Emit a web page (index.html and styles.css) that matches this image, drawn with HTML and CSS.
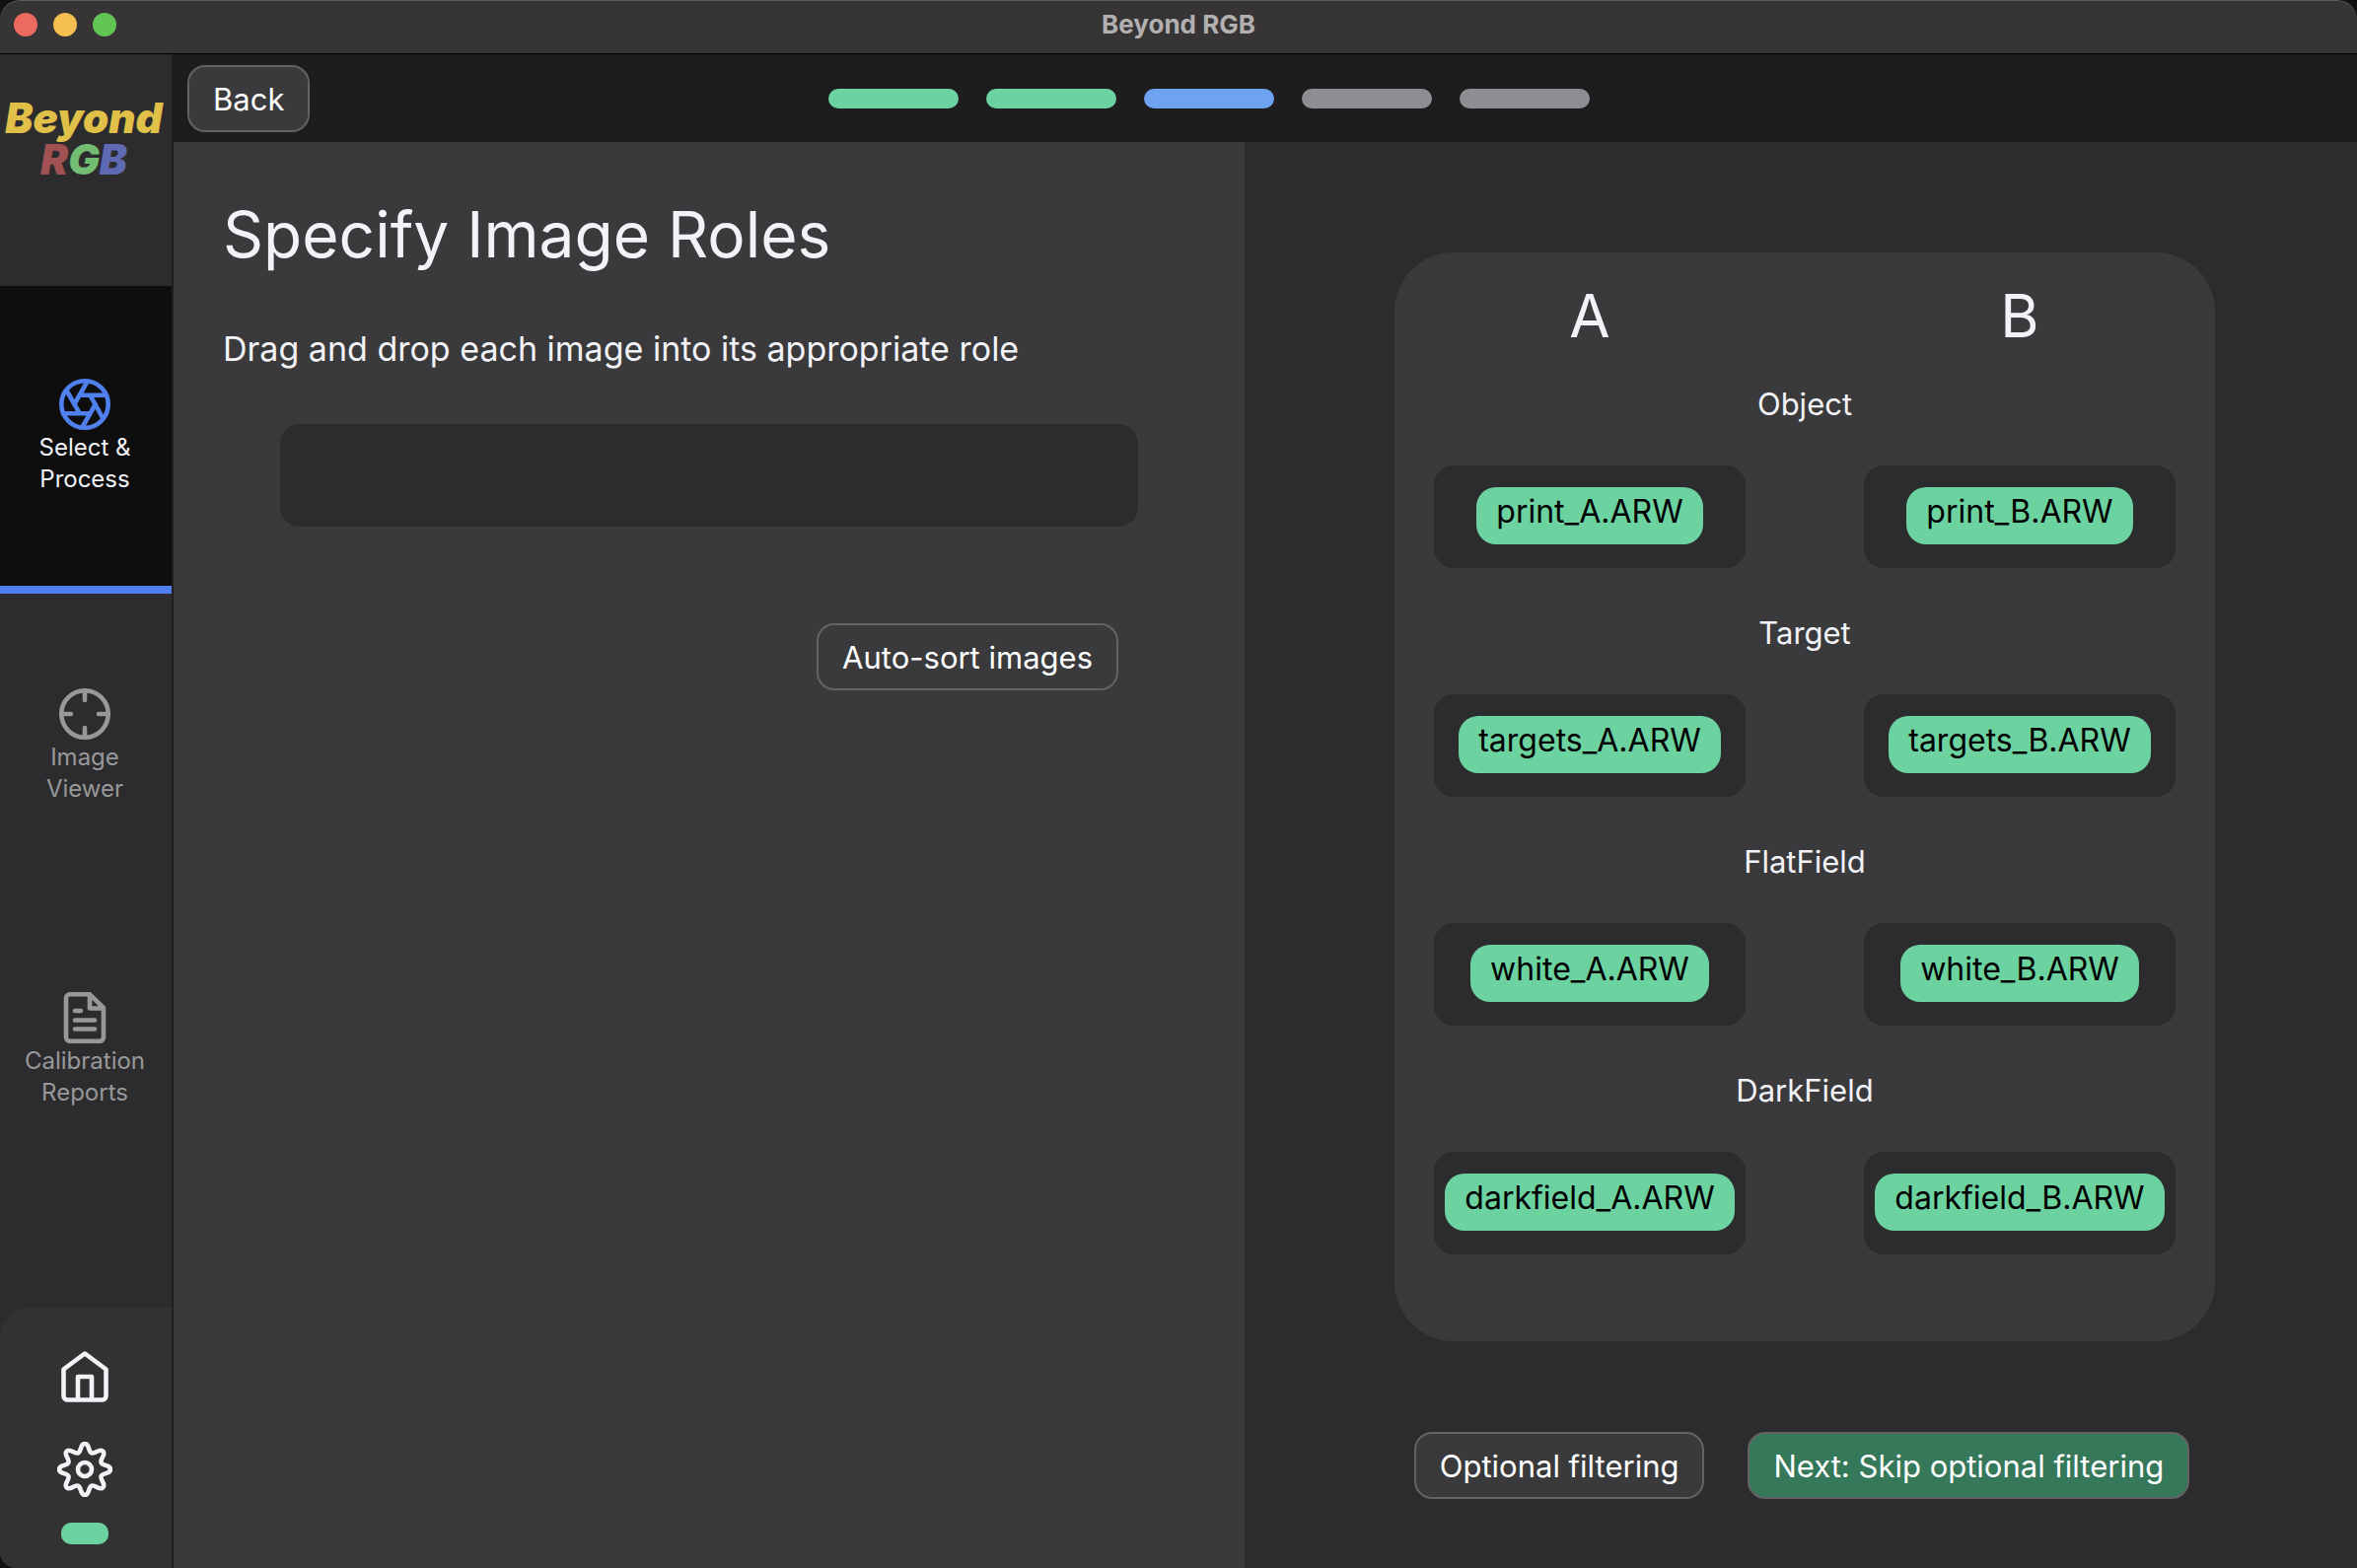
FILE: index.html
```html
<!DOCTYPE html>
<html lang="en">
<head>
<meta charset="utf-8">
<title>Beyond RGB</title>
<link rel="stylesheet" href="styles.css">
</head>
<body>
<div class="window">
  <header class="titlebar">
    <div class="lights"><span class="light close"></span><span class="light minimize"></span><span class="light zoom"></span></div>
    <span class="window-title">Beyond RGB</span>
  </header>
  <div class="app">
    <aside class="sidebar">
      <div class="logo">
        <span class="logo-top">Beyond</span>
        <span class="logo-bottom"><span class="r">R</span><span class="g">G</span><span class="b">B</span></span>
      </div>
      <nav class="nav">
        <a class="nav-item active" href="#process">
          <svg class="icon blue" viewBox="0 0 52 52"><circle cx="26" cy="26" r="23.700"/><path d="M20.700 16.700H48M31.300 16.700 44.500 40.500M36.700 26 23.500 49M31.300 35.200H4M20.700 35.200 7.500 12M15.300 26 28.500 3"/></svg>
          <span>Select &amp;<br>Process</span>
        </a>
        <a class="nav-item" href="#viewer">
          <svg class="icon" viewBox="0 0 52 52"><circle cx="26" cy="26" r="23.700"/><path d="M26 2v10M26 50V40M2 26h10M50 26H40"/></svg>
          <span>Image<br>Viewer</span>
        </a>
        <a class="nav-item" href="#reports">
          <svg class="icon" viewBox="0 0 52 52"><path d="M31 2.300H11a4 4 0 0 0-4 4v39.400a4 4 0 0 0 4 4h30a4 4 0 0 0 4-4V16L31 2.300V16.500H45M16 19h6M16 28.500h20M16 37.500h20"/></svg>
          <span>Calibration<br>Reports</span>
        </a>
      </nav>
      <div class="side-footer">
        <a href="#home" aria-label="Home"><svg class="icon white" viewBox="0 0 52 52"><path d="M4.500 18.500 26 2.500l21.500 16V45.500a4 4 0 0 1-4 4h-35a4 4 0 0 1-4-4ZM19 49V26h14v23"/></svg></a>
        <a href="#settings" aria-label="Settings"><svg class="icon white gear" viewBox="-28 -28 56 56"><circle r="7"/><path d="M0-26C5-26 3.200-18.100 6.900-16.600S14.900-21.900 18.400-18.400 15.100-10.600 16.600-6.900 26-5 26 0 18.100 3.200 16.600 6.900 21.900 14.900 18.400 18.400 10.600 15.100 6.900 16.600 5 26 0 26-3.200 18.100-6.900 16.600-14.900 21.900-18.400 18.400-15.100 10.600-16.600 6.900-26 5-26 0-18.100-3.200-16.600-6.900-21.900-14.900-18.400-18.400-10.600-15.100-6.900-16.600-5-26 0-26Z"/></svg></a>
        <span class="status"></span>
      </div>
    </aside>
    <div class="main">
      <div class="topbar">
        <button class="btn" type="button">Back</button>
        <div class="steps"><span class="step done"></span><span class="step done"></span><span class="step current"></span><span class="step"></span><span class="step"></span></div>
      </div>
      <div class="panels">
        <section class="left">
          <h1>Specify Image Roles</h1>
          <p>Drag and drop each image into its appropriate role</p>
          <div class="dropzone"></div>
          <button class="btn autosort" type="button">Auto-sort images</button>
        </section>
        <section class="right">
          <div class="card">
            <div class="row heads"><h2>A</h2><h2>B</h2></div>
            <h3>Object</h3>
            <div class="row"><div class="slot"><span class="chip">print_A.ARW</span></div><div class="slot"><span class="chip">print_B.ARW</span></div></div>
            <h3>Target</h3>
            <div class="row"><div class="slot"><span class="chip">targets_A.ARW</span></div><div class="slot"><span class="chip">targets_B.ARW</span></div></div>
            <h3>FlatField</h3>
            <div class="row"><div class="slot"><span class="chip">white_A.ARW</span></div><div class="slot"><span class="chip">white_B.ARW</span></div></div>
            <h3>DarkField</h3>
            <div class="row"><div class="slot"><span class="chip">darkfield_A.ARW</span></div><div class="slot"><span class="chip">darkfield_B.ARW</span></div></div>
          </div>
          <div class="actions">
            <button class="btn" type="button">Optional filtering</button>
            <button class="btn next" type="button">Next: Skip optional filtering</button>
          </div>
        </section>
      </div>
    </div>
  </div>
</div>
</body>
</html>
```
FILE: styles.css
```css
* { box-sizing: border-box; }
body { margin: 0; background: #111; font-family: Inter, "Liberation Sans", sans-serif; color: #f2f2f7; }
h1, h2, h3, p { margin: 0; font-weight: 400; }
.window { min-height: 100vh; display: flex; flex-direction: column; background: #2c2c2e; border-radius: 20px 20px 0 16px; overflow: hidden; }

.titlebar { height: 55px; flex: none; display: grid; grid-template-columns: 1fr auto 1fr; align-items: center; padding: 0 14px 4px; background: #373435; border-bottom: 1px solid #000; border-radius: 20px 20px 0 0; box-shadow: inset 0 1px 0 #5a5859; }
.lights { display: flex; gap: 16px; }
.light { width: 24px; height: 24px; border-radius: 50%; }
.close { background: #ed6a5e; }
.minimize { background: #f5bf4f; }
.zoom { background: #61c554; }
.window-title { font-size: 26px; line-height: 32px; font-weight: 700; color: #b3b0b1; }

.app { flex: 1; display: flex; }
.sidebar { width: 176px; flex: none; display: flex; flex-direction: column; border-right: 2px solid #1f1f20; background: #2c2c2e; }
.logo { height: 235px; padding: 44px 4px 0 0; display: flex; flex-direction: column; align-items: center; font-size: 42px; line-height: 42px; font-weight: 900; font-style: italic; }
.logo-top { color: #e0c048; }
.r { color: #a05252; }
.g { color: #73bd73; }
.b { color: #606ab2; }
.nav-item { height: 308px; display: flex; flex-direction: column; align-items: center; justify-content: center; gap: 2px; padding: 2px 2px 0 0; text-align: center; font-size: 24px; line-height: 32px; color: #98989a; text-decoration: none; }
.nav-item.active { height: 312px; background: #0e0e0e; color: #f2f2f7; border-bottom: 8px solid #4f80ee; }
.icon { display: block; width: 52px; height: 52px; fill: none; stroke: #98989a; stroke-width: 4.6; stroke-linecap: round; stroke-linejoin: round; }
.icon.blue { stroke: #4f80ee; }
.icon.white { stroke: #f2f2f7; }
.icon.gear { width: 56px; height: 56px; }
.side-footer { margin-top: auto; height: 264px; padding: 44px 2px 0 0; display: flex; flex-direction: column; align-items: center; background: #323232; border-top-left-radius: 30px; }
.side-footer a + a { margin-top: 40px; }
.status { width: 48px; height: 22px; margin-top: 26px; border-radius: 10px; background: #6cd2a0; }

.main { flex: 1; display: flex; flex-direction: column; }
.topbar { height: 89px; display: grid; grid-template-columns: 1fr auto 1fr; align-items: center; padding: 0 14px; background: #1d1d1d; }
.topbar .btn { justify-self: start; }
.steps { display: flex; gap: 28px; padding-right: 114px; }
.step { width: 132px; height: 20px; border-radius: 10px; background: #8e8d93; }
.step.done { background: #6cd2a0; }
.step.current { background: #70a2f2; }
.btn { height: 68px; padding: 2px 24px 0; border: 2px solid #636366; border-radius: 18px; background: #3a3a3c; color: #fff; font-family: inherit; font-size: 31px; line-height: 40px; white-space: nowrap; }
.btn.next { background: #35785a; }

.panels { flex: 1; display: grid; grid-template-columns: 1086fr 1128fr; }
.left { background: #3a3a3c; padding: 50px; display: flex; flex-direction: column; }
.left h1 { font-size: 64px; line-height: 88px; }
.left p { margin-top: 50px; font-size: 34px; line-height: 44px; }
.dropzone { height: 104px; margin: 54px 58px 0; border-radius: 20px; background: #2c2c2e; }
.autosort { align-self: flex-end; margin: 98px 78px 0 0; }

.right { padding: 112px 144px 0 152px; }
.card { height: 1104px; padding: 30px 40px 0; border-radius: 60px; background: #3a3a3c; }
.row { display: grid; grid-template-columns: 1fr 1fr; gap: 120px; }
.card h2 { font-size: 60px; line-height: 68px; text-align: center; }
.card h3 { height: 128px; padding-top: 46px; font-size: 31px; line-height: 40px; text-align: center; }
.card .heads + h3 { height: 118px; padding-top: 36px; }
.slot { height: 104px; padding-top: 22px; display: flex; justify-content: center; align-items: flex-start; border-radius: 20px; background: #2c2c2e; }
.chip { height: 58px; padding: 5px 20px 0; border-radius: 20px; background: #6cd2a0; color: #000; font-size: 32px; line-height: 40px; }
.actions { display: flex; justify-content: center; gap: 44px; margin-top: 92px; padding-right: 6px; }
```
